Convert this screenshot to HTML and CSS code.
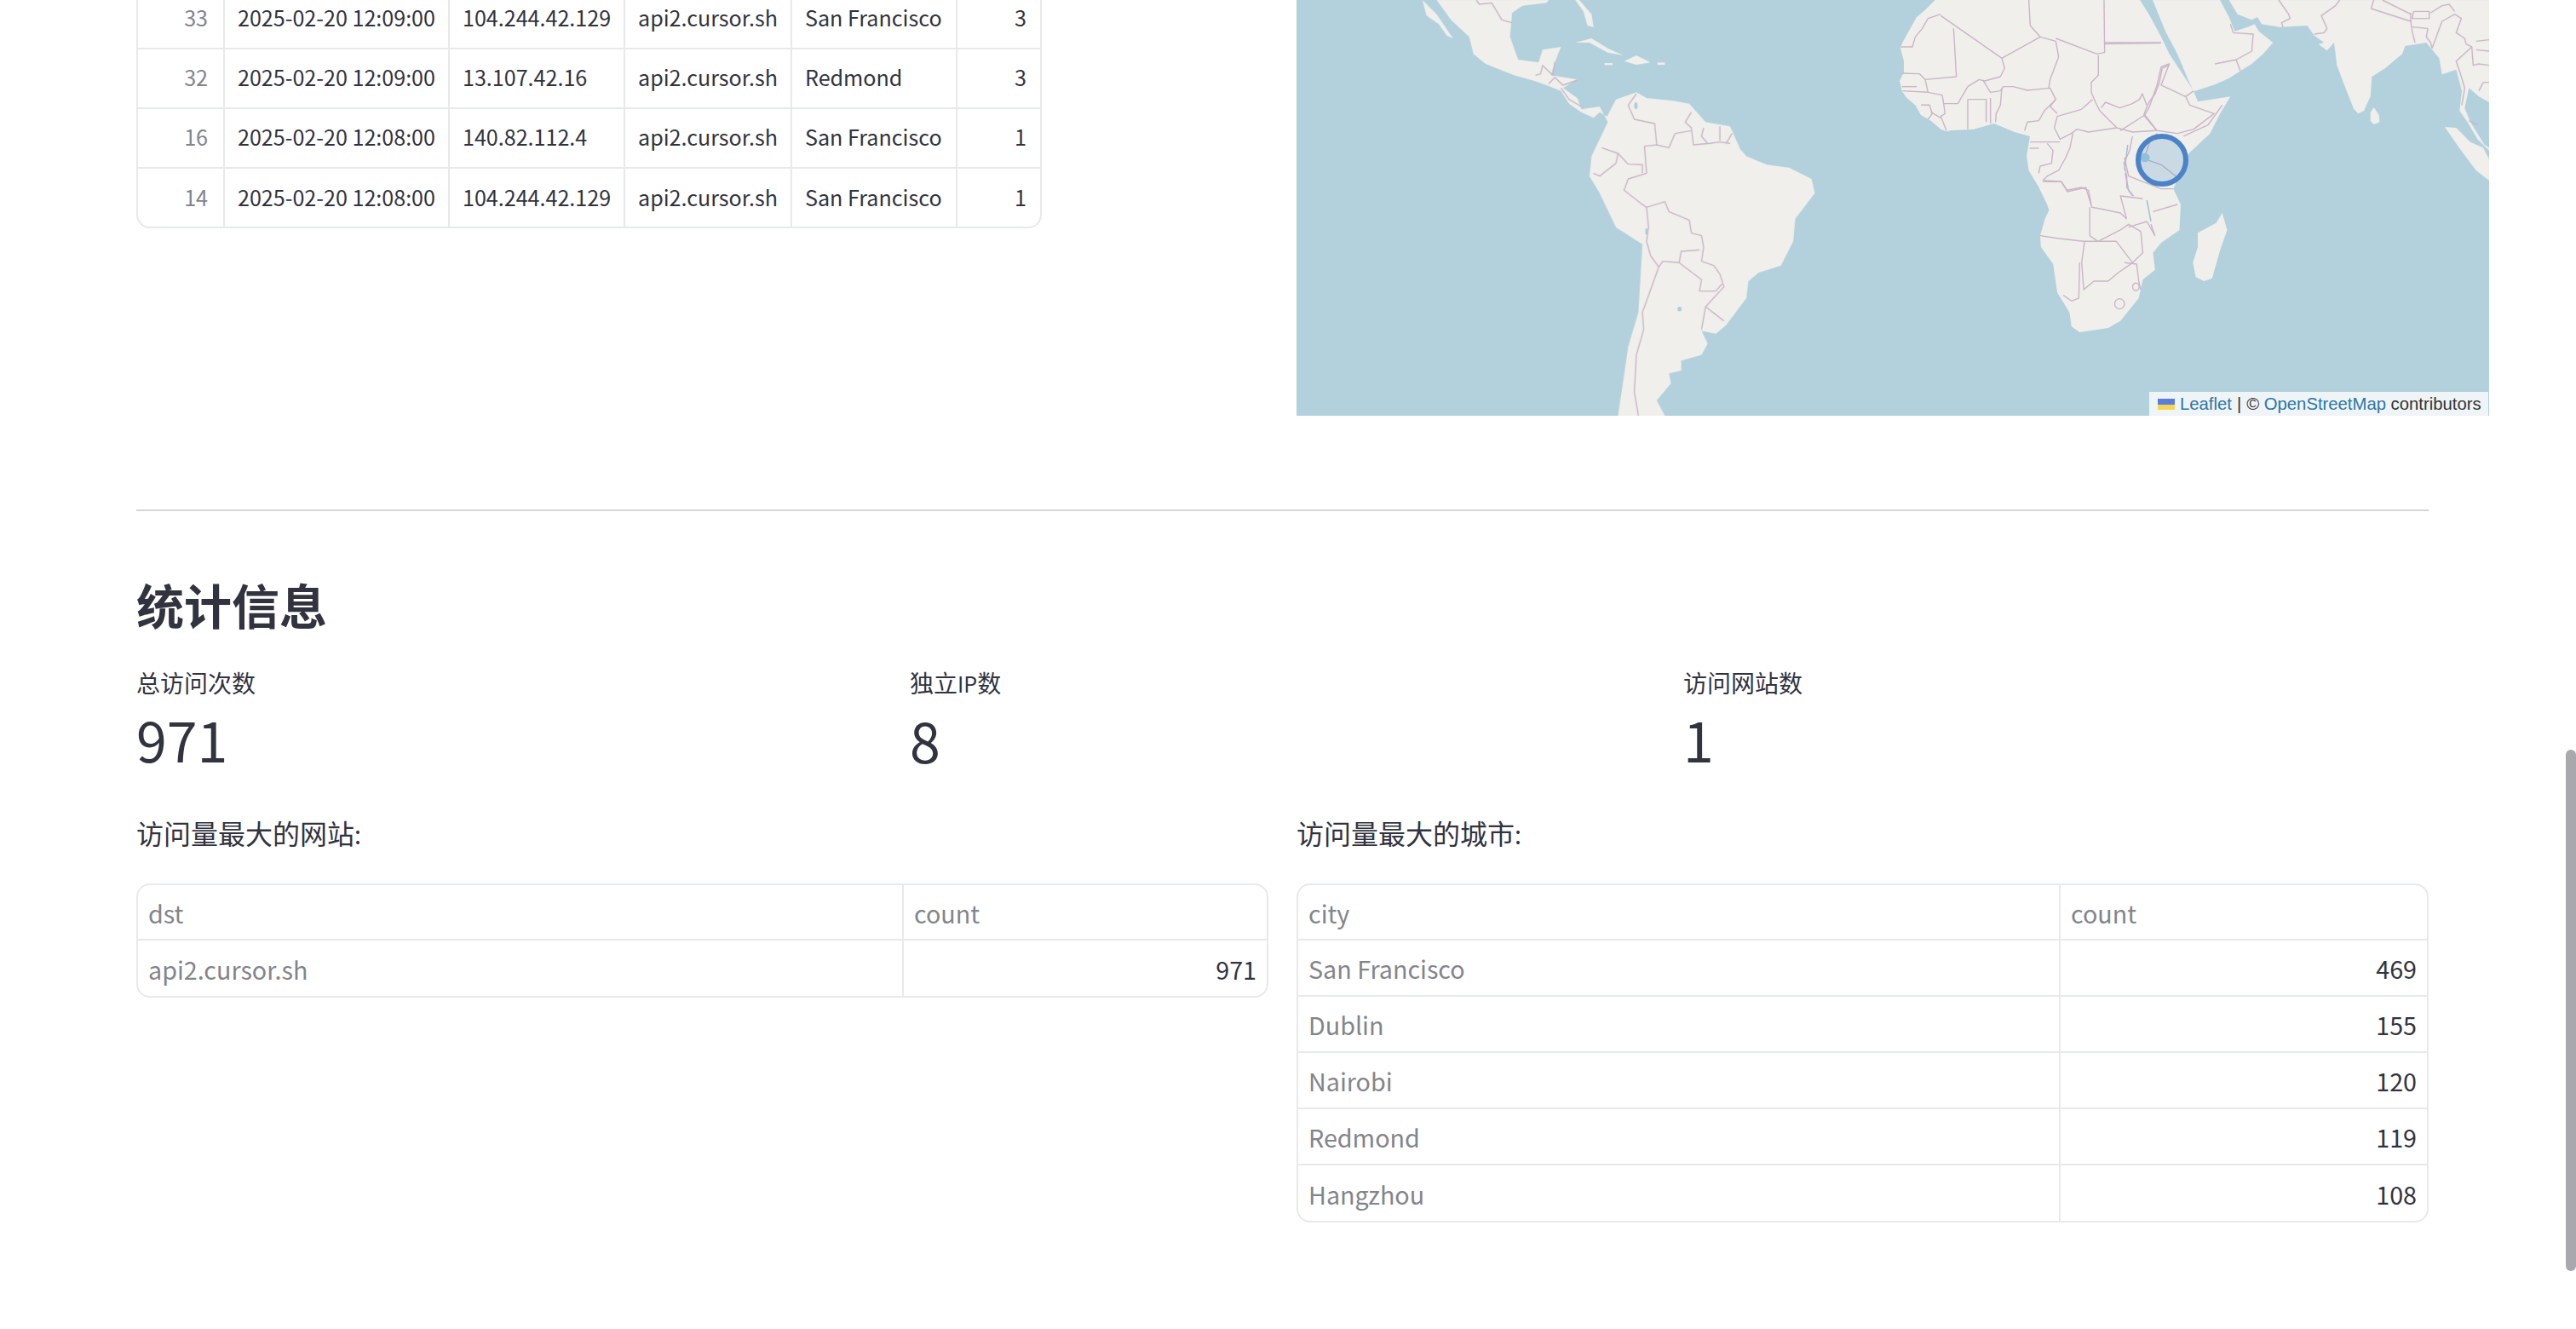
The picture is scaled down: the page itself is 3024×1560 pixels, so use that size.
FILE: index.html
```html
<!DOCTYPE html>
<html lang="zh">
<head>
<meta charset="utf-8">
<title>统计信息</title>
<link rel="stylesheet" href="styles.css">
</head>
<body>
<main class="page">
  <section class="top-row">
    <div class="table-box log-table">
      <table>
        <tbody>
          <tr><td class="idx">33</td><td>2025-02-20 12:09:00</td><td>104.244.42.129</td><td>api2.cursor.sh</td><td>San Francisco</td><td class="num">3</td></tr>
          <tr><td class="idx">32</td><td>2025-02-20 12:09:00</td><td>13.107.42.16</td><td>api2.cursor.sh</td><td>Redmond</td><td class="num">3</td></tr>
          <tr><td class="idx">16</td><td>2025-02-20 12:08:00</td><td>140.82.112.4</td><td>api2.cursor.sh</td><td>San Francisco</td><td class="num">1</td></tr>
          <tr><td class="idx">14</td><td>2025-02-20 12:08:00</td><td>104.244.42.129</td><td>api2.cursor.sh</td><td>San Francisco</td><td class="num">1</td></tr>
        </tbody>
      </table>
    </div>
    <div class="map">
      <svg class="map-svg" viewBox="0 0 1400 488" width="1400" height="488">
        <rect class="sea" x="0" y="0" width="1400" height="488"/>
        <g class="soft">
          <!-- Americas -->
          <g transform="translate(-22 0) scale(.4783 .3333)">
            <polygon class="land" points="390,0 425,70 470,130 480,190 510,225 580,265 630,285 660,300 695,320 715,365 745,395 775,415 790,395 808,410 830,350 880,325 905,345 970,355 1010,365 1050,430 1110,445 1135,525 1150,550 1200,580 1255,590 1310,630 1318,680 1270,770 1265,850 1235,935 1180,960 1155,990 1150,1050 1100,1145 1075,1175 1040,1165 1055,1210 1040,1250 990,1270 990,1305 960,1315 965,1350 930,1410 950,1464 835,1464 850,1320 860,1220 885,1100 895,860 830,800 790,680 765,620 770,550 810,430 790,375 745,385 735,345 700,310 735,280 670,265 680,220 695,165 650,175 640,220 590,210 570,130 575,45 600,20 660,10 665,0"/>
            <polygon class="land" points="355,0 390,50 430,135 415,125 395,85 365,55"/>
            <polygon class="land" points="740,0 770,50 775,95 760,90 750,40 730,0"/>
            <polygon class="land" points="730,150 770,135 810,170 848,195 810,185 765,150"/>
            <polygon class="land" points="850,215 880,195 915,220 880,228"/>
            <polygon class="land" points="932,220 950,220 950,228 932,228"/>
            <polygon class="land" points="802,222 822,222 822,229 802,229"/>
            <polyline class="line" points="487,0 495,15 525,10 550,70 575,80"/>
            <polyline class="line" points="680,218 675,265 650,230 645,260 632,265"/>
            <polyline class="line" points="665,295 680,272 700,300 735,282"/>
            <polyline class="line" points="695,310 715,350 745,375"/>
            <polyline class="line" points="880,330 860,370 875,420 925,435 930,510 900,515 905,610 860,630 850,670 890,715 905,730 950,710 960,745 1010,775 1015,820 1040,830 1045,870 1040,920 1070,935 1085,965 1095,1010 1050,1080 1040,1160"/>
            <polyline class="line" points="1015,395 1000,430 1015,450 1020,510 1060,505 1085,500 1110,505"/>
            <polyline class="line" points="930,510 960,520 975,470 1015,460"/>
            <polyline class="line" points="1045,450 1040,480 1055,505"/>
            <polyline class="line" points="1085,445 1085,495"/>
            <polyline class="line" points="1115,470 1100,505"/>
            <polyline class="line" points="795,520 835,540 860,578 895,580 895,610"/>
            <polyline class="line" points="835,540 830,575 790,620 775,610"/>
            <polyline class="line" points="905,730 910,800 905,850 915,900 935,940"/>
            <polyline class="line" points="935,940 945,920 985,925 990,885 1035,880"/>
            <polyline class="line" points="985,925 1040,985 1035,1025 1075,1025 1090,1000"/>
            <polyline class="line" points="935,940 915,1020 895,1100 898,1160 880,1250 875,1380 885,1464"/>
            <polyline class="line" points="1050,1080 1095,1130"/>
            <ellipse class="lake" cx="905" cy="815" rx="3" ry="12"/>
            <ellipse class="lake" cx="879" cy="372" rx="4" ry="12"/>
            <ellipse class="lake" cx="986" cy="1088" rx="5" ry="8"/>
          </g>
          <!-- West and central Africa -->
          <g transform="translate(628 0) scale(.3333)">
            <polygon class="land" points="365,0 330,35 300,60 275,105 250,150 243,170 255,215 255,255 240,285 248,320 265,345 295,370 315,405 350,425 385,455 405,463 450,452 500,455 500,0"/>
          </g>
          <!-- East and south Africa -->
          <g transform="translate(728 0) scale(.4783 .3333)">
            <polygon class="land" points="50,0 548,0 570,50 600,130 620,190 650,255 680,322 690,358 770,340 745,400 720,470 668,540 630,665 648,720 645,810 600,855 580,890 585,950 555,985 545,1050 500,1130 470,1155 400,1170 380,1150 375,1100 345,1030 335,930 305,870 303,830 315,770 325,740 320,720 300,660 275,600 270,550 278,480 240,465 190,435 140,455 73,460"/>
            <polygon class="land" points="750,750 762,810 745,880 725,980 705,990 685,975 678,925 690,870 690,820 735,785"/>
            <polyline class="line" points="310,640 355,640 370,675 415,660 430,730 450,735 500,750 515,770 500,690 555,700"/>
            <polyline class="line" points="425,730 425,830 445,850 500,810 520,790 550,815 555,890 530,925"/>
            <polyline class="line" points="303,830 350,840 410,850 490,850 530,925 495,960 470,990 435,990 410,1020 405,925 412,850"/>
            <polyline class="line" points="400,925 398,1050 380,1060 360,1040"/>
            <polyline class="line" points="510,925 540,930 545,990 550,1020"/>
            <polyline class="line" points="580,745 640,720"/>
            <polyline class="line" points="520,800 565,780 585,830 575,790"/>
            <polyline class="line" points="560,405 590,460 640,470 680,455 730,400 670,370 660,340 680,320"/>
            <polyline class="line" points="600,235 590,300 570,380 560,405 500,460"/>
            <polyline class="line" points="600,235 620,225 600,300 660,340"/>
            <polyline class="line" points="655,480 715,440 750,370"/>
            <polyline class="line" points="560,560 600,580 640,625"/>
            <polyline class="line" points="590,470 575,490 560,550"/>
            <polyline class="line" points="462,150 600,150"/>
            <polyline class="line" points="510,555 520,620 600,665 630,665"/>
            <ellipse class="ring" cx="498" cy="1070" rx="12" ry="18"/>
            <ellipse class="ring" cx="538" cy="1010" rx="8" ry="13"/>
            <polyline class="river" points="512,610 520,670 532,690"/>
            <polyline class="river" points="565,705 575,780"/>
            <polyline class="river" points="518,510 510,600"/>
            <ellipse class="lake" cx="560" cy="555" rx="12" ry="16"/>
          </g>
          <!-- West Africa borders on the same 3x grid -->
          <g transform="translate(628 0) scale(.3333)">
            <polyline class="line" points="385,50 340,65 320,100 295,130 285,165 245,165"/>
            <polyline class="line" points="385,55 600,205 735,130 700,90 695,0"/>
            <polyline class="line" points="430,100 440,270 330,280 310,260 250,258"/>
            <polyline class="line" points="600,205 610,240 595,270 540,285 520,280 480,305 445,365 395,365"/>
            <polyline class="line" points="330,280 340,325 390,335 395,365 400,400 385,410 405,460"/>
            <polyline class="line" points="250,320 340,325"/>
            <polyline class="line" points="248,305 300,305"/>
            <polyline class="line" points="535,285 560,325 595,320 605,305 640,305 690,318 770,310 790,350 770,375 795,400"/>
            <polyline class="line" points="735,130 790,145 800,200 770,280 765,310"/>
            <polyline class="line" points="790,135 935,190 962,185 960,0"/>
            <polyline class="line" points="940,195 940,265 915,290 915,325 930,360 945,390 1005,450 1060,465 1145,460 1100,405 1115,365 1140,330 1155,290 1165,240 1190,230"/>
            <polyline class="line" points="920,350 880,385 795,410 785,450 805,490 845,470 865,455 905,465 1005,450"/>
            <polyline class="line" points="962,155 1160,152"/>
            <polyline class="line" points="480,350 480,455"/>
            <polyline class="line" points="480,350 545,350 545,430"/>
            <polyline class="line" points="560,345 560,435"/>
            <polyline class="line" points="600,310 595,370 580,400 578,430"/>
            <polyline class="line" points="315,370 345,370 355,400 340,420"/>
            <polyline class="line" points="350,395 385,415"/>
            <polyline class="line" points="790,350 750,390 730,425 690,430 680,460"/>
            <polyline class="line" points="700,500 805,500"/>
            <polyline class="line" points="698,522 730,522"/>
            <polyline class="line" points="760,505 780,530 775,575 735,585 730,610"/>
            <polyline class="line" points="850,470 840,520 825,555 800,600 760,620 745,635 810,640 830,670 880,660 905,670 915,720"/>
            <polyline class="line" points="950,380 965,360 1015,380 1060,365 1085,350 1095,330 1110,370"/>
            <polyline class="line" points="1060,480 1050,530 1030,575 1040,620 1040,660 1060,690"/>
          </g>
          <!-- Arabia and Asia -->
          <g transform="translate(1078 0) scale(.3333)">
            <polygon class="land" points="-219,0 -174,110 -132,190 -90,290 -75,322 0,298 50,275 90,250 130,225 170,190 205,150 155,110 140,85 115,95 70,110 50,60 18,0"/>
            <polygon class="land" points="50,0 80,50 130,70 150,60 165,85 230,95 325,90 350,125 385,150 365,155 395,178 420,150 430,230 460,310 490,385 505,400 525,390 548,340 553,270 600,240 660,190 670,162 745,150 790,205 800,262 850,245 870,320 862,390 890,430 925,490 966,530 966,0"/>
            <polygon class="sea" points="895,310 880,380 900,430 950,510 966,520 966,360 930,340"/>
            <polygon class="land" points="810,447 850,450 900,500 945,520 966,560 966,635 920,600 860,520"/>
            <polygon class="land" points="548,395 560,378 578,405 580,430 560,438 548,425"/>
            <polyline class="line" points="225,0 260,50 265,65 235,80 240,95"/>
            <polyline class="line" points="440,0 425,20 375,55 395,100 385,115 350,120"/>
            <polyline class="line" points="550,30 560,0"/>
            <polyline class="line" points="550,30 690,75 690,45"/>
            <polyline class="line" points="590,0 690,50"/>
            <polyline class="line" points="700,40 755,40 755,65 695,65 700,40"/>
            <polyline class="line" points="690,75 695,110 705,150"/>
            <polyline class="line" points="695,95 750,100 745,130 760,150 765,170"/>
            <polyline class="line" points="765,170 800,75 845,50 868,65 850,115 880,135 885,155 905,165 850,215 865,260 880,310 870,370"/>
            <polyline class="line" points="760,45 800,20 825,15 845,40"/>
            <polyline class="line" points="905,165 910,230 930,225 966,230"/>
            <polyline class="line" points="920,145 966,140"/>
            <polyline class="line" points="920,175 966,180"/>
            <polyline class="line" points="930,320 945,290 966,290"/>
            <polyline class="line" points="895,425 925,440"/>
            <polyline class="line" points="0,225 75,210 90,250"/>
            <polyline class="line" points="75,210 130,180 135,120 65,115 55,85"/>
          </g>
        </g>
        <circle class="marker" cx="1016" cy="188" r="28"/>
      </svg>
      <div class="attribution">
        <svg class="flag" viewBox="0 0 20 13" width="20" height="13"><rect class="flag-blue" width="20" height="7"/><rect class="flag-yellow" y="7" width="20" height="6"/></svg>
        <a class="attr-link">Leaflet</a><span class="attr-sep">|</span><span>© <a class="attr-link">OpenStreetMap</a> contributors</span>
      </div>
    </div>
  </section>

  <hr class="rule">

  <h2 class="title">统计信息</h2>

  <section class="metrics">
    <div class="metric"><div class="metric-label">总访问次数</div><div class="metric-value">971</div></div>
    <div class="metric"><div class="metric-label">独立<span class="latin">IP</span>数</div><div class="metric-value">8</div></div>
    <div class="metric"><div class="metric-label">访问网站数</div><div class="metric-value">1</div></div>
  </section>

  <section class="bottom-row">
    <div class="bottom-col">
      <p class="subhead">访问量最大的网站<span class="latin">:</span></p>
      <div class="table-box data-table dst-table">
        <table>
          <thead><tr><th>dst</th><th>count</th></tr></thead>
          <tbody>
            <tr><th>api2.cursor.sh</th><td class="num">971</td></tr>
          </tbody>
        </table>
      </div>
    </div>
    <div class="bottom-col">
      <p class="subhead">访问量最大的城市<span class="latin">:</span></p>
      <div class="table-box data-table city-table">
        <table>
          <thead><tr><th>city</th><th>count</th></tr></thead>
          <tbody>
            <tr><th>San Francisco</th><td class="num">469</td></tr>
            <tr><th>Dublin</th><td class="num">155</td></tr>
            <tr><th>Nairobi</th><td class="num">120</td></tr>
            <tr><th>Redmond</th><td class="num">119</td></tr>
            <tr><th>Hangzhou</th><td class="num">108</td></tr>
          </tbody>
        </table>
      </div>
    </div>
  </section>
</main>
<div class="scrollbar"></div>
</body>
</html>
```

FILE: styles.css
```css
* { box-sizing: border-box; }
html, body { margin: 0; height: 100%; overflow: hidden; background: #fff; }
body {
  font-family: "Noto Sans CJK SC", "Source Sans Pro", sans-serif;
  color: #31333f;
}
.page { width: 3024px; height: 1560px; padding: 0 173px 0 160px; overflow: hidden; }
.latin { font-size: .896em; }

.top-row { display: grid; grid-template-columns: 1329px 1329px; column-gap: 33px; height: 488px; }
.table-box { border: 2px solid #e8e9eb; border-radius: 16px; overflow: hidden; background: #fff; }
.table-box table { border-collapse: separate; border-spacing: 0; table-layout: fixed; width: 100%; }

.log-table { width: 1063px; align-self: start; margin-top: -12px; border-top: 0; border-radius: 0 0 16px 16px; }
.log-table td {
  height: 70px; padding: 0 16px 4px 15px; font-size: 25.1px; line-height: 34px; white-space: nowrap;
  border-right: 2px solid #e8e9eb; border-bottom: 2px solid #e8e9eb;
}
.log-table tr:last-child td { border-bottom: 0; height: 68px; padding-bottom: 3px; }
.log-table td:last-child { border-right: 0; }
.log-table td:nth-child(1) { width: 102px; }
.log-table td:nth-child(2) { width: 264px; }
.log-table td:nth-child(3) { width: 206px; }
.log-table td:nth-child(4) { width: 196px; }
.log-table td:nth-child(5) { width: 194px; }
.idx { text-align: right; color: #83848c; padding-right: 18px !important; }
.num { text-align: right; }

.map { position: relative; width: 1400px; height: 488px; }
.map-svg { display: block; }
.sea { fill: #b3d1dd; }
.land { fill: #f0efeb; }
.soft { filter: blur(.5px); }
.line, .ring { fill: none; stroke: #c9b6c6; stroke-width: 1.4px; vector-effect: non-scaling-stroke; stroke-linejoin: round; }
.river { fill: none; stroke: #9dc2d6; stroke-width: 1.5px; vector-effect: non-scaling-stroke; }
.lake { fill: #a9cede; }
.marker { fill: #3186cc; fill-opacity: .2; stroke: #4a83c8; stroke-width: 6px; }
.attribution {
  position: absolute; right: 1px; bottom: 0; height: 28px; width: 398px;
  display: flex; align-items: center; padding-left: 10px;
  background: #eff4f7; color: #333; font: 20.3px/28px "Liberation Sans", Arial, sans-serif; white-space: nowrap;
}
.flag { flex: none; margin-right: 6px; }
.flag-blue { fill: #5b7ddc; }
.flag-yellow { fill: #f5d64e; }
.attr-link { color: #2b77a8; }
.attr-sep { margin: 0 6px; }

.rule { height: 2px; margin: 110px 0 0; border: 0; background: #d6d6d9; }
.title { margin: 69px 0 0; font-size: 56px; line-height: 80px; font-weight: 700; }

.metrics { display: grid; grid-template-columns: 876px 876px 875px; column-gap: 32px; margin-top: 32px; }
.metric-label { font-size: 28px; line-height: 40px; }
.metric-value { font-size: 64.5px; line-height: 90px; margin-top: 1px; }

.bottom-row { display: grid; grid-template-columns: 1329px 1329px; column-gap: 33px; margin-top: 40px; }
.subhead { margin: 0 0 34px; font-size: 32px; line-height: 48px; }

.data-table th, .data-table td {
  height: 66px; padding: 2px 12px 0; font-size: 28.7px; font-weight: 400; line-height: 40px; text-align: left;
  border-right: 2px solid #e8e9eb; border-bottom: 2px solid #e8e9eb;
}
.data-table thead th { height: 65px; }
.data-table th { color: #83848c; }
.data-table td.num { text-align: right; }
.data-table tr > *:last-child { border-right: 0; }
.data-table tbody tr:last-child > * { border-bottom: 0; height: 65px; }
.dst-table th:first-child { width: 899px; }
.city-table th:first-child { width: 895px; }

.scrollbar {
  position: fixed; right: 0; top: 880px; width: 12px; height: 612px;
  background: #a9a9ad; border-radius: 6px;
}
```
